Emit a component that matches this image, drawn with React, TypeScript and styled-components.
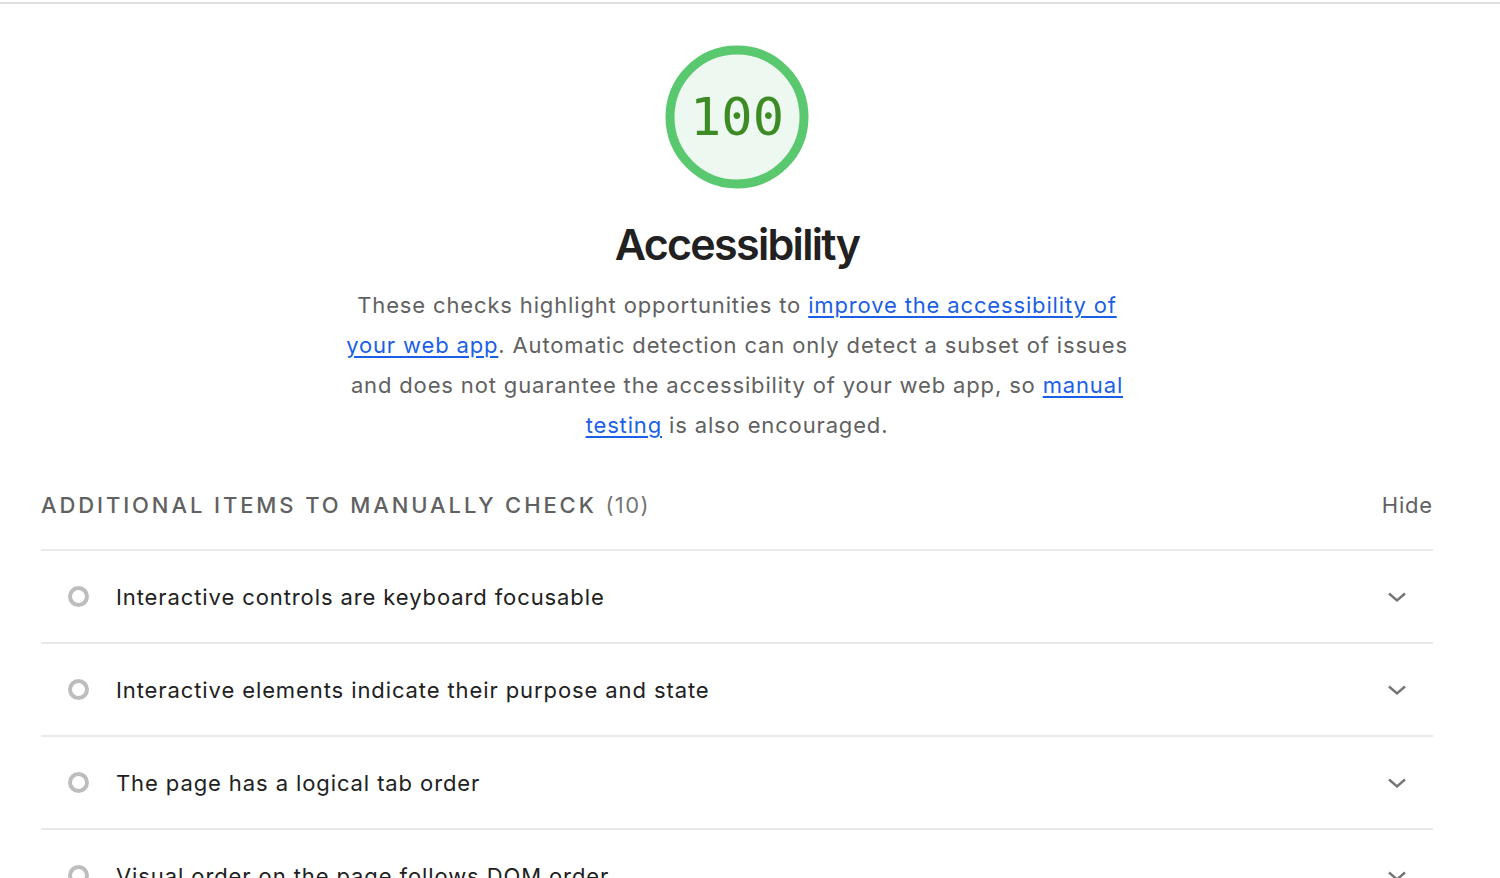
import React from "react";
import styled, { createGlobalStyle } from "styled-components";

const Global = createGlobalStyle`
  html, body { margin: 0; padding: 0; background: #fff; }
  body { font-family: Inter, "Noto Sans", sans-serif; -webkit-font-smoothing: antialiased; }
`;

const Page = styled.div`
  border-top: 2px solid #e0e0e0;
  margin-top: 2px;
  padding: 0 67px 0 41px;
`;

const Header = styled.section`
  display: flex;
  flex-direction: column;
  align-items: center;
  padding-top: 40px;
`;

const Gauge = styled.svg`
  width: 146px;
  height: 146px;
  display: block;
`;

const Title = styled.h1`
  margin: 26px 0 0;
  font-size: 43px;
  line-height: 56px;
  font-weight: 600;
  color: #212121;
  letter-spacing: -1.7px;
`;

const Description = styled.p`
  margin: 13px 0 0;
  width: 800px;
  text-align: center;
  font-size: 22px;
  line-height: 40px;
  letter-spacing: 0.85px;
  color: #616161;
`;

const Link = styled.a`
  color: #1a5fe6;
  text-decoration: underline;
  text-underline-offset: 3px;
`;

const GroupHeader = styled.div`
  display: flex;
  align-items: center;
  justify-content: space-between;
  margin-top: 30px;
  height: 60px;
  border-bottom: 2px solid #e9e9e9;
  padding-bottom: 14px;
`;

const GroupTitle = styled.div`
  font-size: 22px;
  font-weight: 500;
  letter-spacing: 2.9px;
  text-transform: uppercase;
  color: #616161;
`;

const Count = styled.span`
  font-weight: 400;
  letter-spacing: 1.4px;
  color: #757575;
`;

const HideButton = styled.button`
  border: 0;
  background: none;
  padding: 0;
  font: inherit;
  font-size: 22px;
  letter-spacing: 0.8px;
  color: #616161;
  cursor: pointer;
`;

const Row = styled.div`
  display: flex;
  align-items: center;
  height: 91px;
  border-bottom: 2px solid #e9e9e9;
  padding: 0 26px 0 27px;
`;

const Marker = styled.span`
  width: 13px;
  height: 13px;
  border: 4px solid #bdbdbd;
  border-radius: 50%;
  flex: none;
  margin-right: 27px;
`;

const RowText = styled.span`
  flex: 1;
  font-size: 22px;
  color: #212121;
  letter-spacing: 0.9px;
`;

const Chevron = styled.svg`
  width: 20px;
  height: 20px;
  flex: none;
`;

const items = [
  "Interactive controls are keyboard focusable",
  "Interactive elements indicate their purpose and state",
  "The page has a logical tab order",
  "Visual order on the page follows DOM order",
  "User focus is not accidentally trapped in a region",
];

export default function App() {
  return (
    <>
      <Global />
      <Page>
        <Header>
          <Gauge viewBox="0 0 146 146">
            <circle cx="73" cy="73" r="67" fill="#edf8f0" stroke="#5ac86e" strokeWidth="9" />
            <text
              x="73"
              y="91"
              textAnchor="middle"
              fontFamily="'DejaVu Sans Mono', monospace"
              fontSize="52"
              fill="#3d8b24"
            >
              100
            </text>
          </Gauge>
          <Title>Accessibility</Title>
          <Description>
            These checks highlight opportunities to{" "}
            <Link href="#">improve the accessibility of your web app</Link>. Automatic detection can only
            detect a subset of issues and does not guarantee the accessibility of your web app, so{" "}
            <Link href="#">manual testing</Link> is also encouraged.
          </Description>
        </Header>
        <GroupHeader>
          <GroupTitle>
            Additional items to manually check <Count>(10)</Count>
          </GroupTitle>
          <HideButton>Hide</HideButton>
        </GroupHeader>
        {items.map((t) => (
          <Row key={t}>
            <Marker />
            <RowText>{t}</RowText>
            <Chevron viewBox="0 0 20 20">
              <path d="M2 6.5 L10 13.5 L18 6.5" fill="none" stroke="#757575" strokeWidth="2.4" />
            </Chevron>
          </Row>
        ))}
      </Page>
    </>
  );
}
